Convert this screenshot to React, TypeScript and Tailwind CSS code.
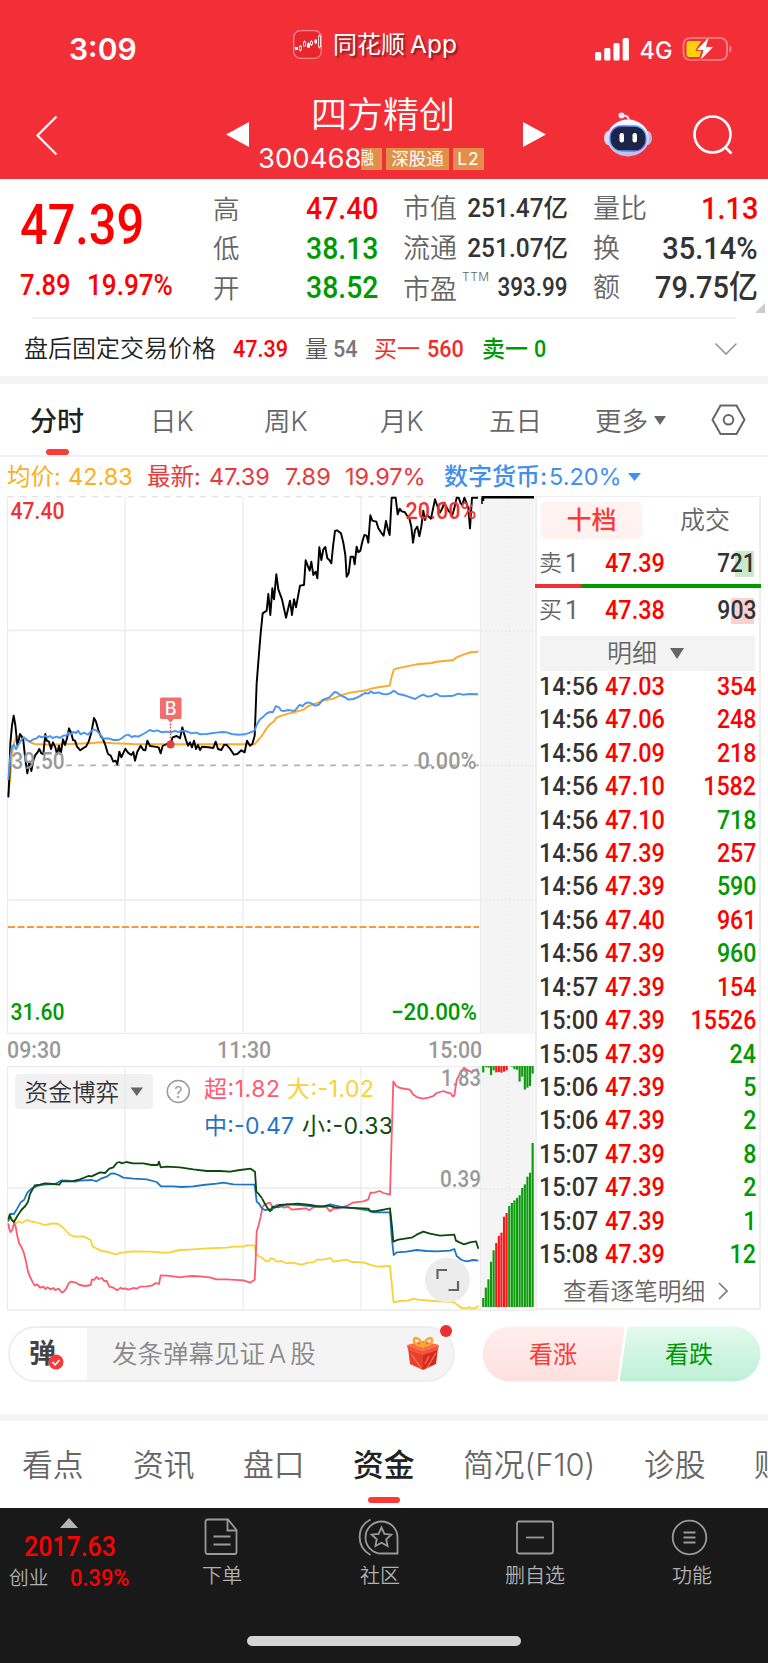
import React from "react";

type TextProps = { className?: string; children: React.ReactNode };

const Num = ({ className = "", children }: TextProps) => (
  <span className={`inline-block whitespace-nowrap font-['Roboto','Noto_Sans_CJK_SC',sans-serif] leading-none ${className}`}>{children}</span>
);

const Cell = ({ className = "", children }: TextProps) => (
  <div className={`flex shrink-0 items-center whitespace-nowrap ${className}`}>{children}</div>
);

const Caret = ({ className = "" }: { className?: string }) => (
  <svg viewBox="0 0 14 10" preserveAspectRatio="none" className={`shrink-0 ${className}`}>
    <path d="M0 0h14L7 10z" fill="currentColor" />
  </svg>
);

function StatusBar() {
  return (
    <div className="flex h-[88px] items-start">
      <div className="mt-[34px] w-[224px] shrink-0 pl-[69px] text-[30px] font-semibold">3:09</div>
      <div className="mt-[30px] ml-[69px] flex w-[302px] shrink-0 items-center">
        <svg width="29" height="29" viewBox="0 0 29 29">
          <rect x="0.7" y="0.7" width="27.6" height="27.6" rx="6.5" fill="#e9252e" stroke="#f98a8e" strokeWidth="1.3" />
          <g fill="#fff">
            <rect x="2" y="17" width="3" height="3" />
            <rect x="14" y="13.500" width="3" height="4" />
            <rect x="21.500" y="9.500" width="2.500" height="4" />
          </g>
          <g fill="none" stroke="#fff" strokeWidth="0.8">
            <path d="M7.500 15v1m0 4v1.500M11.500 10.500v1.500M18.500 10v1.500m0 3v1.500M26.500 4.500v1.500m0 11v1.500M15.500 12v6" />
            <rect x="6.500" y="16.500" width="2" height="3.500" />
            <rect x="10.500" y="12" width="2.200" height="4" />
            <rect x="17.500" y="11.500" width="2" height="3" />
            <rect x="25.500" y="6" width="2" height="11" />
          </g>
        </svg>
        <span className="ml-[11px] text-[24px] [text-shadow:2px_2px_2px_rgba(0,0,0,0.45)]">同花顺</span>
        <span className="ml-[5px] text-[24.5px] [text-shadow:2px_2px_2px_rgba(0,0,0,0.45)]">App</span>
      </div>
      <svg width="140" height="26" viewBox="0 0 140 26" className="mt-[36px] overflow-visible">
        <g fill="#fff">
          <rect x="0" y="16" width="6.200" height="8.500" rx="1.500" />
          <rect x="9.200" y="12" width="6.200" height="12.500" rx="1.500" />
          <rect x="18.400" y="7" width="6.200" height="17.500" rx="1.500" />
          <rect x="27.700" y="2" width="6.200" height="22.500" rx="1.500" />
        </g>
        <text x="44.500" y="23" fill="#fff" fontSize="24.500" fontWeight="500" fontFamily="Inter" textLength="33" lengthAdjust="spacingAndGlyphs">4G</text>
        <rect x="88.500" y="2" width="43.500" height="22" rx="6.500" fill="none" stroke="#fa8b8f" strokeWidth="1.700" />
        <path d="M134.500 9.500c2.500 1 2.500 6 0 7z" fill="#fa8b8f" />
        <path d="M94.500 5h12l-6 9h6l-2 7h-10a3 3 0 0 1-3-3v-10a3 3 0 0 1 3-3z" fill="#fdd20a" />
        <path d="M114 .5L101 14.500h7l-3.500 11L119 10.500h-7.500L114.500.5z" fill="#fff" stroke="#f22f37" strokeWidth="0.900" />
      </svg>
    </div>
  );
}

function TitleBar() {
  return (
    <div className="flex h-[91px] items-start">
      <svg width="24" height="42" viewBox="0 0 24 42" className="mt-[26px] ml-[35px] shrink-0">
        <path d="M21.500 2.500L2.500 21.500l19 19" fill="none" stroke="#fff" strokeWidth="2.300" />
      </svg>
      <svg width="23" height="26" viewBox="0 0 23 26" className="mt-[34px] ml-[167px] shrink-0">
        <path d="M23 0v25L0 12.500z" fill="#fff" />
      </svg>
      <div className="ml-[9px] flex w-[265px] shrink-0 flex-col">
        <div className="mt-[9px] pl-[53px] text-[36px] font-[350]">四方精创</div>
        <div className="mt-[12px] flex items-center">
          <span className="w-[104px] text-[27.500px]">300468</span>
          <span className="-ml-px flex h-[22px] w-[21px] items-center overflow-hidden bg-[#e29049] text-[17px]">
            <span className="origin-left scale-x-75">融</span>
          </span>
          <span className="ml-1 flex h-[22px] w-[63px] items-center justify-center bg-[#e29049] text-[17.500px]">深股通</span>
          <span className="ml-1 flex h-[22px] w-[31px] items-center justify-center bg-[#e29049] text-[17.500px] tracking-[1px]">L2</span>
        </div>
      </div>
      <svg width="23" height="26" viewBox="0 0 23 26" className="mt-[34px] shrink-0">
        <path d="M0 0v25l23-12.500z" fill="#fff" />
      </svg>
      <svg width="50" height="46" viewBox="0 0 50 46" className="mt-[24px] ml-[57px] shrink-0">
        <defs>
          <linearGradient id="shell" x1="0" y1="0" x2="0" y2="1">
            <stop offset="0" stopColor="#fff" />
            <stop offset="1" stopColor="#bcb9ea" />
          </linearGradient>
          <linearGradient id="rim" x1="0" y1="0" x2="1" y2="1">
            <stop offset="0" stopColor="#7a4be8" />
            <stop offset="0.500" stopColor="#4fc3f7" />
            <stop offset="1" stopColor="#7a4be8" />
          </linearGradient>
        </defs>
        <path d="M18 4.500c5-2 8 0 8 5" fill="none" stroke="#e6e4f8" strokeWidth="2" />
        <circle cx="18.500" cy="3.500" r="3" fill="#e3e6f8" />
        <ellipse cx="5.500" cy="26" rx="4.500" ry="7" fill="#d9d8f3" />
        <ellipse cx="44.500" cy="26" rx="4.500" ry="7" fill="#b9bae8" />
        <ellipse cx="25" cy="26" rx="21" ry="18.500" fill="url(#shell)" />
        <rect x="7" y="14" width="36" height="25" rx="11.500" fill="#1c2447" stroke="url(#rim)" strokeWidth="1.300" />
        <rect x="16.500" y="21" width="4.500" height="9.500" rx="2.200" fill="#fff" />
        <rect x="29.500" y="21" width="4.500" height="9.500" rx="2.200" fill="#fff" />
      </svg>
      <svg width="42" height="42" viewBox="0 0 42 42" className="mt-[26px] ml-[39px] shrink-0">
        <circle cx="20.500" cy="20.500" r="18" fill="none" stroke="#fff" strokeWidth="2.600" />
        <path d="M33 33l6.500 6.500" stroke="#fff" strokeWidth="2.600" />
      </svg>
    </div>
  );
}

function Quotes() {
  return (
    <div className="relative flex h-[138px] text-[#666]">
      <div className="w-[213px] shrink-0 pl-[20px] text-[#ff0000]">
        <div className="h-[92px] pt-[19px]">
          <Num className="origin-left scale-x-[0.885] text-[55px] font-medium">47.39</Num>
        </div>
        <div className="flex">
          <div className="w-[67px]"><Num className="origin-left scale-x-[0.88] text-[29px] font-medium">7.89</Num></div>
          <div><Num className="origin-left scale-x-[0.9] text-[29px] font-medium">19.97%</Num></div>
        </div>
      </div>
      <div className="flex w-[165px] shrink-0 flex-col pt-[10px] text-[26.500px] font-[350]">
        {[["高", "47.40", "text-[#ff0000]"], ["低", "38.13", "text-[#009900]"], ["开", "38.52", "text-[#009900]"]].map(([k, v, c]) => (
          <div key={k} className="flex h-[39.500px] items-center justify-between">
            <span>{k}</span>
            <Num className={`origin-right scale-x-90 text-[31.500px] font-medium ${c}`}>{v}</Num>
          </div>
        ))}
      </div>
      <div className="ml-[25px] flex w-[165px] shrink-0 flex-col pt-[10px] text-[27px] font-[350]">
        {[["市值", "251.47亿"], ["流通", "251.07亿"]].map(([k, v]) => (
          <div key={k} className="flex h-[39.500px] items-center">
            <span className="w-[64px]">{k}</span>
            <div className="flex w-[101px] justify-end text-[#333]">
              <Num className="origin-right scale-x-[0.96] text-[25.500px] font-medium">{v}</Num>
            </div>
          </div>
        ))}
        <div className="flex h-[39.500px] items-center">
          <span className="w-[59px] pt-[4px]">市盈</span>
          <span className="w-[25px] pb-[22px] text-[12px] tracking-[0.500px]">TTM</span>
          <div className="flex w-[81px] justify-end text-[#333]">
            <Num className="origin-right scale-x-[0.88] text-[25.500px] font-medium">393.99</Num>
          </div>
        </div>
      </div>
      <div className="ml-[25px] flex w-[165px] shrink-0 flex-col pt-[10px] text-[27px] font-[350]">
        {[["量比", "1.13", "text-[#ff0000]"], ["换", "35.14%", "text-[#333]"], ["额", "79.75亿", "text-[#333]"]].map(([k, v, c]) => (
          <div key={k} className="flex h-[39.500px] items-center justify-between">
            <span className="shrink-0">{k}</span>
            <Num className={`origin-right scale-x-[0.92] text-[31.500px] font-medium ${c}`}>{v}</Num>
          </div>
        ))}
      </div>
      <svg width="10" height="10" viewBox="0 0 10 10" className="absolute right-[3px] bottom-[4px]">
        <path d="M10 0v10H0z" fill="#ccc" />
      </svg>
    </div>
  );
}

function AfterHours() {
  return (
    <>
      <div className="mx-8 h-[2px] bg-[#f2f2f2]" />
      <div className="flex h-[57px] items-center pl-[24px] pt-[4px]">
        <Cell className="w-[209px] text-[24px] font-[350] text-[#222]">盘后固定交易价格</Cell>
        <Cell className="w-[72px] text-[#ff0000]"><Num className="origin-left scale-x-90 text-[24px] font-medium">47.39</Num></Cell>
        <Cell className="w-[28px] text-[23px] font-[350] text-[#555]">量</Cell>
        <Cell className="w-[41px] text-[#777]"><Num className="origin-left scale-x-90 text-[24px] font-medium">54</Num></Cell>
        <Cell className="w-[53px] text-[23px] text-[#f02c2c]">买一</Cell>
        <Cell className="w-[55px] text-[#f02c2c]"><Num className="origin-left scale-x-90 text-[24px] font-medium">560</Num></Cell>
        <Cell className="w-[52px] text-[23px] font-medium text-[#009900]">卖一</Cell>
        <Cell className="w-[180px] text-[#009900]"><Num className="origin-left scale-x-90 text-[24px] font-medium">0</Num></Cell>
        <svg width="24" height="14" viewBox="0 0 24 14" className="shrink-0">
          <path d="M1.500 1.500L12 12 22.500 1.500" fill="none" stroke="#999" strokeWidth="1.700" />
        </svg>
      </div>
      <div className="h-2 bg-[#f4f4f4]" />
    </>
  );
}

function PeriodTabs() {
  return (
    <>
      <div className="flex h-[71px] text-[26.500px] font-[350] text-[#666]">
        <div className="flex w-[121px] shrink-0 flex-col pt-[24px] pl-[30px]">
          <span className="text-[27px] font-medium text-[#222]">分时</span>
          <span className="mt-[14px] ml-[16px] h-[6px] w-[23px] rounded-full bg-[#fb3b35]" />
        </div>
        <div className="w-[113px] shrink-0 pt-[24px] pl-[29px]">日K</div>
        <div className="w-[116px] shrink-0 pt-[24px] pl-[30px]">周K</div>
        <div className="w-[139px] shrink-0 pt-[24px] pl-[30px]">月K</div>
        <div className="w-[106px] shrink-0 pt-[24px]">五日</div>
        <div className="flex w-[117px] shrink-0 items-start pt-[24px]">
          更多<Caret className="mt-[8px] ml-[6px] h-[9px] w-[12px] text-[#666]" />
        </div>
        <svg width="35" height="32" viewBox="0 0 35 32" className="mt-[20px] -ml-px shrink-0">
          <path d="M9.500 1.500h16l8 14.300-8 14.200h-16L1.500 15.800z" fill="none" stroke="#666" strokeWidth="2" />
          <circle cx="17.500" cy="15.800" r="4.800" fill="none" stroke="#666" strokeWidth="2" />
        </svg>
      </div>
      <div className="h-[2px] bg-[#efefef]" />
    </>
  );
}

function Legend() {
  return (
    <div className="flex h-[39px] items-center pt-px text-[23.500px] font-[380] text-[#e8393b]">
      <Cell className="w-[60px] pl-[7px] text-[#fbb021]">均价:</Cell>
      <Cell className="w-[79px] pl-[8px] text-[#fbb021]">42.83</Cell>
      <Cell className="w-[62px] pl-[8px]">最新:</Cell>
      <Cell className="w-[76px] pl-[8px]">47.39</Cell>
      <Cell className="w-[60px] pl-[8px]">7.89</Cell>
      <Cell className="w-[100px] pl-[8px]">19.97%</Cell>
      <Cell className="w-[105px] pl-[7px] text-[24px] font-medium text-[#438fee]">数字货币:</Cell>
      <Cell className="w-[86px] pl-[7px] text-[#438fee]">5.20%</Cell>
      <Caret className="h-[8px] w-[13px] text-[#438fee]" />
    </div>
  );
}

const LABEL = { fontFamily: "Roboto", fontSize: 23 } as const;

type LabelProps = { x: number; y: number; w: number; fill: string; weight?: number; children: string };
const ChartLabel = ({ x, y, w, fill, weight = 500, children }: LabelProps) => (
  <text x={x} y={y} {...LABEL} fontWeight={weight} fill={fill} textLength={w} lengthAdjust="spacingAndGlyphs">{children}</text>
);

const PRICE_AM = "25,922 28,860 31,760 36,706 41,677 46,705 52,765 56,752 60,732 65,738 70,752 75,800 82,850 88,815 94,843 100,812 106,795 112,788 118,777 124,790 130,792 136,732 140,752 147,755 153,777 159,757 166,772 171,793 177,767 182,793 189,748 195,765 201,745 207,715 213,727 219,750 225,752 231,770 241,781 250,774 258,770 266,755 274,728 282,684 288,695 295,720 302,738 308,745 316,765 324,792 332,797 340,815 347,812 352,823 358,785 364,802 376,776 384,788 394,795 400,786 405,812 412,785 422,767 430,780 436,781 442,752 450,768 464,770 476,772 482,790 488,768 500,762 512,762 518,742 530,738 540,745 547,712 552,730 558,750 564,767 570,757 576,772 582,752 588,777 594,765 600,780 606,770 625,772 640,774 647,755 654,777 664,780 672,765 679,764 690,776 702,794 712,792 724,781 734,787 741,752 750,767 757,762 764,737 767,660 770,580";
const PRICE_PM = "50,580 57,490 62,430 68,370 80,362 85,312 91,375 97,295 102,328 109,253 115,298 126,328 138,383 150,332 156,375 162,328 168,352 180,287 192,285 197,211 209,242 214,215 220,255 227,245 232,265 238,172 244,210 250,178 256,171 262,205 268,210 274,220 279,170 285,123 291,121 303,130 310,158 316,195 320,260 326,250 332,200 340,200 344,223 350,170 355,187 361,182 367,155 373,135 380,137 385,158 391,76 397,92 409,95 415,115 425,130 431,137 438,93 443,115 449,135 455,23 467,23 473,73 479,56 485,64 494,66 500,75 508,85 514,110 519,158 525,120 532,110 538,139 544,110 550,62 555,90 561,75 573,86 585,28 591,45 600,68 607,55 613,38 625,62 637,75 643,55 650,23 656,23 662,40 667,45 673,23 680,40 685,55 690,115 696,23 714,23";
const SECTOR_AM = "25,870 31,800 36,768 42,765 48,778 55,765 65,748 72,742 80,750 90,755 100,748 110,745 118,738 124,742 136,738 142,742 150,738 158,744 170,740 180,744 190,737 200,736 205,728 212,733 220,726 228,729 234,722 242,733 252,728 264,734 272,725 280,718 290,722 300,733 310,746 325,745 340,750 355,750 365,745 375,737 385,734 395,741 405,738 415,740 430,732 450,720 460,724 472,721 485,727 500,725 512,727 525,723 535,726 545,722 560,724 575,730 590,728 600,733 620,732 635,730 650,728 665,726 680,727 695,732 715,734 735,733 750,728 764,722";
const SECTOR_PM = "44,722 50,705 60,688 70,680 80,670 90,666 98,667 108,648 118,653 124,662 132,663 145,660 155,662 165,662 178,645 188,648 195,641 204,637 214,640 225,647 235,645 248,630 258,626 268,622 278,612 284,606 292,608 304,617 315,622 325,629 340,627 352,622 362,617 375,609 385,611 392,604 402,610 415,607 428,612 440,613 450,610 462,602 475,612 490,615 505,620 525,627 540,618 550,614 562,620 575,618 588,611 600,618 615,619 640,617 655,611 668,614 690,612 714,613";
const AVG_AM = "25,915 31,860 36,790 42,760 48,745 58,738 66,742 78,748 90,757 105,762 150,764 270,760 300,757 340,760 400,762 512,763 765,763";
const AVG_PM = "43,763 55,750 65,738 75,722 85,708 95,699 103,693 109,683 125,677 145,671 165,666 180,662 192,658 205,648 220,643 250,632 280,626 300,617 330,608 380,601 392,596 420,591 449,587 455,560 461,540 470,535 500,529 530,523 577,519 585,516 640,510 650,502 670,494 695,486 710,486 715,483";

const FLOWS = [
  {
    color: "#f8d236",
    am: "25,600 30,590 38,597 46,612 56,604 65,609 82,599 90,604 105,606 135,615 160,610 175,612 190,624 210,645 225,650 250,649 272,660 277,679 290,686 302,692 325,696 347,703 365,698 400,694 450,695 485,698 505,698 540,690 580,688 620,685 680,683 700,680 730,680 742,676 764,676 768,702 776,708 785,712",
    pm: "5,712 15,722 26,724 33,714 42,718 50,725 65,723 78,730 95,728 125,734 145,728 160,727 172,719 190,719 212,714 220,725 240,722 258,719 275,726 310,727 330,734 350,740 390,738 396,800 401,847 420,843 445,842 460,836 475,839 520,843 580,846 592,854 605,864 620,865 628,861 635,866 648,864 655,857",
  },
  {
    color: "#ff5a70",
    am: "25,610 28,628 32,636 38,628 42,608 47,620 52,648 58,672 64,680 72,700 78,725 84,755 90,770 97,785 104,797 112,793 120,803 130,800 136,807 142,802 152,808 160,804 166,810 176,806 186,818 194,812 200,803 206,790 212,785 228,788 240,795 255,798 272,795 276,778 282,780 289,771 296,777 306,774 312,783 320,783 328,800 340,803 352,811 362,803 368,807 376,805 385,809 400,804 410,806 420,800 440,799 455,797 468,789 477,792 482,766 500,767 520,769 540,772 560,769 580,768 600,769 630,772 650,778 680,778 730,781 750,788 764,779 767,720 770,635 776,615 782,590 788,560",
    pm: "8,560 14,553 30,548 38,562 50,555 62,557 72,563 85,560 95,569 118,567 138,565 148,571 158,563 180,558 200,562 210,574 222,565 232,566 262,557 278,548 310,544 325,538 331,519 345,517 359,513 370,519 390,524 395,350 400,184 408,197 420,204 450,209 460,224 475,233 490,236 505,233 520,228 530,219 550,213 560,217 572,220 578,229 583,227 590,180 600,160 612,143 625,152 635,156 645,150 655,147",
  },
  {
    color: "#1f75c4",
    am: "25,605 30,582 42,582 52,565 62,547 72,540 82,518 92,508 102,502 115,497 130,494 165,492 185,481 205,482 225,485 240,482 275,480 290,484 305,475 320,470 332,461 342,460 355,465 370,473 400,476 440,478 470,486 483,499 520,499 545,501 580,499 610,495 650,491 670,488 700,493 764,494 770,545 778,552 786,566",
    pm: "6,566 15,570 28,568 35,570 45,560 55,562 80,553 120,555 165,560 190,560 210,553 240,560 290,566 325,571 340,577 390,577 395,650 401,705 410,697 440,695 470,690 500,693 530,694 570,692 583,687 590,708 605,720 620,724 640,720 655,722",
  },
  {
    color: "#0c4a0c",
    am: "25,598 29,585 35,600 42,606 52,588 64,570 76,558 84,545 90,522 104,496 120,494 135,490 160,492 178,494 185,484 215,484 240,478 265,468 275,469 300,457 315,459 328,446 340,442 350,429 358,426 366,430 378,426 400,430 430,430 455,435 473,435 477,425 482,442 500,440 540,442 580,448 620,453 660,453 690,455 720,450 752,446 765,455 769,515 778,524 786,535",
    pm: "6,535 15,552 22,563 30,574 38,560 45,563 58,555 85,553 115,551 150,555 180,560 205,557 225,562 260,563 325,566 332,574 350,573 375,568 390,565 396,620 400,665 415,659 455,653 470,644 490,635 510,641 540,647 583,644 588,662 600,668 612,673 630,667 648,664 655,686",
  },
];

function PriceChart() {
  return (
    <svg width="536" height="538" viewBox="0 496 536 538" className="block">
      <path d="M7.500 497V1034M125 497V1034M243 497V1034M361 497V1034M480.500 497V1034M8 630.500H481M8 900H481M8 1033.500H481" stroke="#ececec" strokeWidth="1.300" fill="none" />
      <path d="M8 496.500H481" stroke="#e8e4dc" strokeWidth="1.500" strokeDasharray="6 6" />
      <rect x="481" y="497" width="53.500" height="537" fill="#f4f4f4" />
      <path d="M509 498V1034M481 631H534M481 765.500H534M481 900H534" stroke="#e8e8e8" strokeWidth="1" strokeDasharray="2 2" />
      <path d="M66 765.300H479" stroke="#b2b2b2" strokeWidth="1.700" strokeDasharray="6 6" />
      <path d="M8 927H479" stroke="#f79a3c" strokeWidth="2" strokeDasharray="7 2.500" />
      <g fill="none" strokeWidth="5.800" strokeLinejoin="round">
        <g transform="translate(0 490) scale(0.33333)">
          <polyline points={AVG_AM} stroke="#fda929" />
          <polyline points={PRICE_AM} stroke="#000" />
          <polyline points={SECTOR_AM} stroke="#4a95f0" />
        </g>
        <g transform="translate(240 490) scale(0.33333)">
          <polyline points={AVG_PM} stroke="#fda929" />
          <polyline points={PRICE_PM} stroke="#000" />
          <polyline points={SECTOR_PM} stroke="#4a95f0" />
        </g>
      </g>
      <path d="M481.500 497.300H534" stroke="#000" strokeWidth="2.600" />
      <path d="M482 504V498M483.500 501V498" stroke="#000" strokeWidth="1.500" />
      <path d="M170.500 720V744" stroke="#ee4b4e" strokeWidth="1.300" strokeDasharray="2 1.300" />
      <rect x="160" y="697.500" width="21.500" height="21.500" rx="1.500" fill="#f16d6f" />
      <path d="M166.500 718.500h8l-4 4z" fill="#f16d6f" />
      <text x="170.700" y="714.500" textAnchor="middle" fontFamily="Inter" fontWeight="500" fontSize="18" fill="#fff">B</text>
      <circle cx="170.500" cy="744.500" r="4" fill="#e23f43" />
      <ChartLabel x={10.500} y={519} w={54} fill="#ee3336">47.40</ChartLabel>
      <ChartLabel x={405.500} y={519} w={71} fill="#ee3336">20.00%</ChartLabel>
      <ChartLabel x={11.500} y={769} w={53} fill="#999">39.50</ChartLabel>
      <ChartLabel x={417.500} y={769} w={59} fill="#999">0.00%</ChartLabel>
      <ChartLabel x={10.500} y={1020} w={54} fill="#009900">31.60</ChartLabel>
      <ChartLabel x={391} y={1020} w={86} fill="#009900">−20.00%</ChartLabel>
    </svg>
  );
}

const BAR_TOPS = [834, 803, 778, 725, 691, 669, 648, 638, 590, 579, 558, 549, 541, 534, 526, 504, 493, 470, 458, 369];
const BAR_DROPS = [157, 141, 143, 165, 151, 157, 156, 158, 155, 151, 138, 140, 147, 149, 185, 170, 209, 203, 198, 161];

function FlowChart() {
  return (
    <svg width="536" height="245" viewBox="0 1066 536 245" className="block">
      <path d="M7.500 1066V1310M125 1066V1310M243 1066V1310M361 1066V1310M480.500 1066V1310M8 1066.500H481M8 1188H481M7 1310H481" stroke="#ececec" strokeWidth="1.300" fill="none" />
      <rect x="481" y="1066" width="53.500" height="240.500" fill="#f4f4f4" />
      <path d="M509 1066V1306M481 1189H534" stroke="#e6e6e6" strokeDasharray="2 2" />
      <rect x="481" y="1309.500" width="54" height="1.500" fill="#eee" />
      <g transform="translate(260 1020) scale(0.33333)">
        {BAR_TOPS.map((top, i) => (
          <rect key={i} x={666.500 + i * 7.800} y={top} width="6.400" height={861 - top} fill={i > 4 && i < 10 ? "#ff1414" : "#0a9a0a"} />
        ))}
        {BAR_DROPS.map((end, i) => (
          <rect key={i} x={666.500 + i * 7.800} y={138} width="6.400" height={end - 138} fill={i > 4 && i < 10 ? "#ff1414" : "#0a9a0a"} />
        ))}
      </g>
      <rect x="15" y="1074" width="138" height="35" rx="4" fill="#f1f1f1" />
      <path d="M125 1074v35" stroke="#e6e6e6" />
      <text x="24.500" y="1101" fontFamily="'Noto Sans CJK SC'" fontWeight="350" fontSize="23.700" fill="#333">资金博弈</text>
      <path d="M130.500 1087.500h12.500l-6.200 8.500z" fill="#666" />
      <circle cx="178.300" cy="1091.500" r="11" fill="none" stroke="#999" strokeWidth="1.500" />
      <text x="178.300" y="1097.500" textAnchor="middle" fontFamily="Inter" fontSize="16" fill="#999">?</text>
      <g fontFamily="Inter, 'Noto Sans CJK SC'" fontSize="23">
        <text x="204" y="1096.500" fill="#ff5a70" textLength="76" lengthAdjust="spacing">超:1.82</text>
        <text x="287" y="1096.500" fill="#f8d236" textLength="87" lengthAdjust="spacing">大:-1.02</text>
        <text x="204" y="1133.500" fill="#1f75c4" textLength="90" lengthAdjust="spacing">中:-0.47</text>
        <text x="302" y="1133.500" fill="#0c4a0c" textLength="91" lengthAdjust="spacing">小:-0.33</text>
      </g>
      <g fill="none" strokeWidth="5.400" strokeLinejoin="round">
        {FLOWS.map((f) => (
          <g key={f.color} stroke={f.color}>
            <polyline points={f.am} transform="translate(0 1020) scale(0.33333)" />
            <polyline points={f.pm} transform="translate(260 1020) scale(0.33333)" />
          </g>
        ))}
      </g>
      <ChartLabel x={441} y={1086} w={40} fill="#999">1.83</ChartLabel>
      <ChartLabel x={440} y={1187} w={41} fill="#999">0.39</ChartLabel>
      <circle cx="447.500" cy="1280" r="22.500" fill="#ececec" />
      <path d="M437.500 1279V1270H447M448.500 1290H458V1281" fill="none" stroke="#666" strokeWidth="2.200" />
    </svg>
  );
}

const TRADES: [string, string, string, boolean][] = [
  ["14:56", "47.03", "354", true],
  ["14:56", "47.06", "248", true],
  ["14:56", "47.09", "218", true],
  ["14:56", "47.10", "1582", true],
  ["14:56", "47.10", "718", false],
  ["14:56", "47.39", "257", true],
  ["14:56", "47.39", "590", false],
  ["14:56", "47.40", "961", true],
  ["14:56", "47.39", "960", false],
  ["14:57", "47.39", "154", true],
  ["15:00", "47.39", "15526", true],
  ["15:05", "47.39", "24", false],
  ["15:06", "47.39", "5", false],
  ["15:06", "47.39", "2", false],
  ["15:07", "47.39", "8", false],
  ["15:07", "47.39", "2", false],
  ["15:07", "47.39", "1", false],
  ["15:08", "47.39", "12", false],
];

type QuoteRowProps = { side: string; price: string; children: React.ReactNode };
const QuoteRow = ({ side, price, children }: QuoteRowProps) => (
  <div className="flex h-[26px] items-center pl-[2px]">
    <Cell className="w-[66px] gap-[3px] text-[23px] font-[350] text-[#666]">
      {side}<Num className="text-[25px] font-normal">1</Num>
    </Cell>
    <Cell className="w-[70px] text-[#ff0000]"><Num className="origin-left scale-x-[0.92] text-[25.500px] font-medium">{price}</Num></Cell>
    {children}
  </div>
);

function OrderBook() {
  return (
    <div className="flex h-[814px] w-[226px] shrink-0 flex-col border-2 border-t border-[#eee]">
      <div className="mt-[5px] flex h-[37px] items-center text-[25px] text-[#666]">
        <div className="ml-[4px] flex h-[37px] w-[101px] items-center justify-center rounded-[5px] bg-[#fff2f1] font-medium text-[#fb3b35]">十档</div>
        <div className="ml-[38px] font-[350]">成交</div>
      </div>
      <div className="mt-[12px]">
        <QuoteRow side="卖" price="47.39">
          <div className="mr-[5px] flex h-[26px] flex-1 items-center justify-end bg-[linear-gradient(90deg,transparent_60px,#cbe9cb_60px)] text-[#333]">
            <Num className="translate-x-[1px] origin-right scale-x-[0.88] text-[25.500px] font-medium">721</Num>
          </div>
        </QuoteRow>
      </div>
      <div className="-mx-[2px] mt-[7px] flex h-[4px]">
        <div className="w-[46px] bg-[#ee3336]" />
        <div className="flex-1 bg-[#009900]" />
      </div>
      <div className="mt-[10px]">
        <QuoteRow side="买" price="47.38">
          <div className="mr-[5px] flex h-[26px] flex-1 items-center justify-end bg-[linear-gradient(90deg,transparent_56px,#fad0d1_56px)] text-[#333]">
            <Num className="translate-x-[2px] origin-right scale-x-[0.9] text-[25.500px] font-medium">903</Num>
          </div>
        </QuoteRow>
      </div>
      <div className="mt-[12px] mr-[4px] ml-[3px] flex h-[35px] shrink-0 items-center bg-[#f3f3f3] pl-[67px] text-[25px] font-[350] text-[#666]">
        明细<Caret className="ml-[13px] h-[11px] w-[14px]" />
      </div>
      <div className="mt-[6px] flex h-[595px] shrink-0 flex-col justify-end overflow-hidden">
        {TRADES.map(([time, price, volume, up], i) => (
          <div key={i} className="flex h-[33.430px] shrink-0 items-center pl-[2px]">
            <Cell className="w-[66px] text-[#333]"><Num className="origin-left scale-x-[0.915] text-[25.500px] font-medium">{time}</Num></Cell>
            <Cell className="w-[70px] text-[#ff0000]"><Num className="origin-left scale-x-[0.92] text-[25.500px] font-medium">{price}</Num></Cell>
            <div className={up ? "flex flex-1 justify-end pr-[3px] text-[#ff0000]" : "flex flex-1 justify-end pr-[3px] text-[#009900]"}>
              <Num className="origin-right scale-x-[0.91] text-[25.500px] font-medium">{volume}</Num>
            </div>
          </div>
        ))}
      </div>
      <div className="mt-[8px] flex items-center pl-[26px] text-[23.700px] font-[350] whitespace-nowrap text-[#666]">
        查看逐笔明细
        <svg width="10" height="18" viewBox="0 0 10 18" className="ml-[13px] shrink-0">
          <path d="M1 1l8 8-8 8" fill="none" stroke="#777" strokeWidth="1.600" />
        </svg>
      </div>
    </div>
  );
}

function CommentBar() {
  return (
    <div className="flex h-[104px] items-start pt-[15px] pl-[8px]">
      <div className="relative flex h-[56px] w-[447px] shrink-0 items-center rounded-full border-2 border-[#eeeeee] bg-[linear-gradient(90deg,#fff_77px,#f4f4f4_77px)]">
        <span className="ml-[19px] w-[83px] text-[27px] font-bold text-[#444]">弹</span>
        <span className="w-[293px] text-[25.500px] font-[350] text-[#888]">发条弹幕见证<span className="mx-[4px]">A</span>股</span>
        <svg width="36" height="36" viewBox="0 0 36 36" className="shrink-0">
          <path d="M3 12l15 4v18l-13-6z" fill="#e8402c" />
          <path d="M33 12l-15 4v18l13-6z" fill="#d52a20" />
          <path d="M2 9l16-4 16 4-16 6z" fill="#fb6a4a" />
          <path d="M2 9l16 6v4L3 14zM34 9l-16 6v4l15-5z" fill="#f4543a" />
          <path d="M6 18l10 14M22 32l9-15M24 20l-4 8" stroke="#ff7a50" strokeWidth="1.200" />
          <path d="M18 10C14 0 8 1 9 5s6 5 9 5c3 0 8-1 9-5s-5-5-9 5z" fill="none" stroke="#fba72e" strokeWidth="2.600" />
        </svg>
        <svg width="16" height="16" viewBox="0 0 16 16" className="absolute top-[26px] left-[38px]">
          <circle cx="8" cy="8" r="7.500" fill="#f93a36" />
          <path d="M4.500 8l2.700 2.800L11.500 6" fill="none" stroke="#fff" strokeWidth="1.700" />
        </svg>
        <span className="absolute -top-[3px] right-[1px] h-[12px] w-[12px] rounded-full bg-[#ee2d33]" />
      </div>
      <svg width="280" height="56" viewBox="0 0 280 56" className="ml-[27px] shrink-0">
        <defs>
          <linearGradient id="rise" x1="0" y1="0" x2="0" y2="1">
            <stop offset="0" stopColor="#ffeeed" />
            <stop offset="1" stopColor="#fde0de" />
          </linearGradient>
          <linearGradient id="fall" x1="0" y1="0" x2="0" y2="1">
            <stop offset="0" stopColor="#e3faee" />
            <stop offset="1" stopColor="#bdf0d6" />
          </linearGradient>
        </defs>
        <path d="M28 .5H139q3.500 0 3 3.500L136 52q-.5 3.500-4 3.500H28A27.500 27.500 0 0 1 28 .5z" fill="url(#rise)" />
        <path d="M149 .5H251a27.500 27.500 0 0 1 0 55H141q-3.500 0-3-3.500L145 4q.5-3.500 4-3.500z" fill="url(#fall)" />
        <g fontFamily="'Noto Sans CJK SC'" fontSize="24" fontWeight="400">
          <text x="47" y="37" fill="#fb3b35">看涨</text>
          <text x="183" y="37" fill="#009900">看跌</text>
        </g>
      </svg>
    </div>
  );
}

function SectionTabs() {
  return (
    <>
      <div className="h-[7px] bg-[#f4f4f4]" />
      <div className="flex h-[87px] items-start overflow-hidden pt-[29px] text-[30.800px] font-[350] text-[#666]">
        <Cell className="w-[111px] pl-[22px]">看点</Cell>
        <Cell className="w-[110px] pl-[22px]">资讯</Cell>
        <Cell className="w-[111px] pl-[22px]">盘口</Cell>
        <div className="flex w-[110px] shrink-0 flex-col pl-[21px]">
          <span className="font-medium text-[#222]">资金</span>
          <span className="mt-[16px] ml-[15px] h-[6px] w-[32px] rounded-full bg-[#fb3b35]" />
        </div>
        <Cell className="w-[181px] pl-[21px]">简况(F10)</Cell>
        <Cell className="w-[110px] pl-[21px]">诊股</Cell>
        <Cell className="w-[61px] pl-[21px]">财</Cell>
      </div>
    </>
  );
}

function BottomBar() {
  return (
    <div className="flex h-[155px] flex-col bg-[#191919] text-[20px] text-[#b0b0b0]">
      <div className="flex h-[128px]">
        <div className="w-[142px] shrink-0">
          <svg width="18" height="10" viewBox="0 0 18 10" className="mt-[10px] ml-[60px]">
            <path d="M9 0l9 10H0z" fill="#b5b5b5" />
          </svg>
          <div className="mt-[5px] h-[27px] pl-[24px] text-[#ff0000]">
            <Num className="origin-left scale-x-[0.89] text-[28px] font-medium">2017.63</Num>
          </div>
          <div className="mt-[7px] flex items-center">
            <Cell className="w-[70px] pl-[9px] text-[19.700px] font-[350]">创业</Cell>
            <Cell className="text-[#ff0000]"><Num className="origin-left scale-x-[0.93] text-[23.500px] font-medium">0.39%</Num></Cell>
          </div>
        </div>
        <div className="flex w-[160px] shrink-0 flex-col items-center pt-[10px]">
          <svg width="36" height="38" viewBox="0 0 36 38" fill="none" stroke="#999" strokeWidth="1.800">
            <path d="M3.500 1.500h20.500l8.500 10.500v22a2 2 0 0 1-2 2h-27a2 2 0 0 1-2-2v-30.500a2 2 0 0 1 2-2zM23.500 1.500v11h9M9.500 18.500h17M9.500 26.500h17" />
          </svg>
          <span className="mt-[10px] font-[350]">下单</span>
        </div>
        <div className="flex w-[156px] shrink-0 flex-col items-center pt-[10px]">
          <svg width="42" height="38" viewBox="0 0 42 38" fill="none" stroke="#999" strokeWidth="1.800" className="-translate-x-px">
            <path d="M39.500 35.500H23.500A16 16 0 1 1 39.500 19.500zM12.500 1.500C-2 9-2 29 12.500 37" />
            <path d="M23.500 9.500l2.900 6.300 6.900.8-5.100 4.700 1.400 6.800-6.100-3.400-6.100 3.400 1.400-6.800-5.100-4.700 6.900-.8z" />
          </svg>
          <span className="mt-[10px] font-[350]">社区</span>
        </div>
        <div className="flex w-[154px] shrink-0 flex-col items-center pt-[10px]">
          <svg width="40" height="38" viewBox="0 0 40 38" fill="none" stroke="#999" strokeWidth="1.800">
            <rect x="2" y="3.500" width="36" height="32" rx="2" />
            <path d="M11 19.500h18" />
          </svg>
          <span className="mt-[10px] font-[350]">删自选</span>
        </div>
        <div className="flex w-[156px] shrink-0 flex-col items-center pt-[10px]">
          <svg width="38" height="38" viewBox="0 0 38 38" fill="none" stroke="#999" strokeWidth="1.800">
            <circle cx="18.500" cy="19.500" r="16.800" />
            <path d="M12.500 14.500h12M12.500 19.500h12M12.500 24.500h12" />
          </svg>
          <span className="mt-[10px] ml-[4px] font-[350]">功能</span>
        </div>
      </div>
      <div className="mx-auto h-[10px] w-[274px] rounded-full bg-[#d4d4d4]" />
    </div>
  );
}

export default function App() {
  return (
    <div className="flex h-[1663px] w-[768px] flex-col overflow-hidden bg-white font-['Inter','Noto_Sans_CJK_SC',sans-serif] leading-none">
      <header className="h-[179px] shrink-0 bg-[#f22f37] text-white">
        <StatusBar />
        <TitleBar />
      </header>
      <Quotes />
      <AfterHours />
      <PeriodTabs />
      <Legend />
      <div className="flex h-[815px] shrink-0">
        <div className="w-[535px] shrink-0">
          <PriceChart />
          <div className="flex h-[32px] items-center text-[#999]">
            <Cell className="w-[210px] pl-[7px]"><Num className="origin-left scale-x-[0.89] text-[24px] font-medium">09:30</Num></Cell>
            <Cell className="w-[211px] pl-[7px]"><Num className="origin-left scale-x-[0.89] text-[24px] font-medium">11:30</Num></Cell>
            <Cell className="pl-[7px]"><Num className="origin-left scale-x-[0.89] text-[24px] font-medium">15:00</Num></Cell>
          </div>
          <FlowChart />
        </div>
        <OrderBook />
      </div>
      <CommentBar />
      <SectionTabs />
      <BottomBar />
    </div>
  );
}
